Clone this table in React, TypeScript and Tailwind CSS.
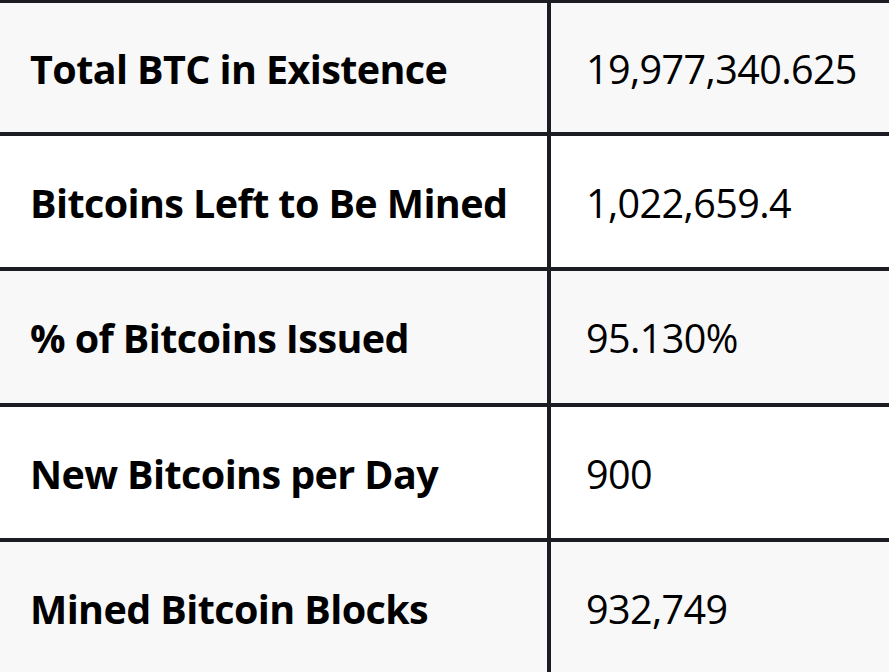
const rows = [
  { label: "Total BTC in Existence", value: "19,977,340.625", h: "h-[132px] border-t-[3px]" },
  { label: "Bitcoins Left to Be Mined", value: "1,022,659.4", h: "h-[135px] border-t-4" },
  { label: "% of Bitcoins Issued", value: "95.130%", h: "h-[136px] border-t-4" },
  { label: "New Bitcoins per Day", value: "900", h: "h-[135px] border-t-4" },
  { label: "Mined Bitcoin Blocks", value: "932,749", h: "h-[135px] border-t-4" },
];

export default function App() {
  return (
    <div className="h-[672px] w-[889px] overflow-hidden bg-white font-['Open_Sans',sans-serif] text-black">
      {rows.map((row, i) => (
        <div
          key={row.label}
          className={`flex border-[#1c1d22] ${row.h} ${i % 2 === 0 ? "bg-[#f8f8f8]" : "bg-white"}`}
        >
          <div className="flex w-[551px] shrink-0 items-center border-r-4 border-[#1c1d22] pl-[30px] pt-1 text-[39.5px] font-bold tracking-[-0.6px]">
            {row.label}
          </div>
          <div className="flex flex-1 items-center pl-[35px] pt-1 text-[39.5px] tracking-[-0.6px]">
            {row.value}
          </div>
        </div>
      ))}
    </div>
  );
}
